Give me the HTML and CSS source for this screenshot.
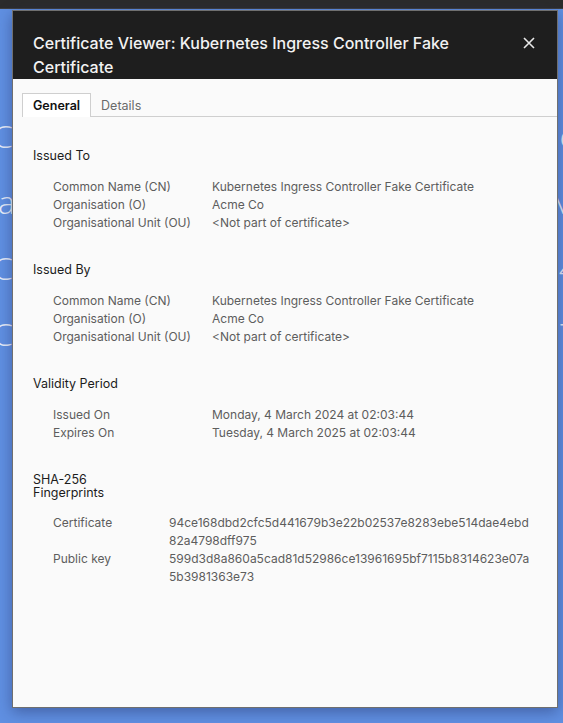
FILE: index.html
```html
<!DOCTYPE html>
<html lang="en">
<head>
<meta charset="utf-8">
<title>Certificate Viewer</title>
<link rel="stylesheet" href="styles.css">
</head>
<body>
<div class="topbar"></div>
<div class="page">
  <div class="bgline"><span class="bl bl-c">C</span><span class="br">e</span></div>
  <div class="bgline"><span class="bl bl-a">a</span><span class="br">M</span></div>
  <div class="bgline"><span class="bl bl-c">C</span><span class="br">4</span></div>
  <div class="bgline"><span class="bl bl-c">C</span><span class="br">T</span></div>
</div>

<div class="dialog">
  <div class="titlebar">
    <h1 class="title">Certificate Viewer: Kubernetes Ingress Controller Fake Certificate</h1>
    <button class="close" aria-label="Close">
      <svg width="12" height="12" viewBox="0 0 12 12"><path d="M1 1L11 11M11 1L1 11" stroke="#e8e8e8" stroke-width="1.6" fill="none"/></svg>
    </button>
  </div>
  <div class="tabs">
    <div class="tab active">General</div>
    <div class="tab">Details</div>
    <div class="tabfill"></div>
  </div>
  <div class="content">
    <section class="section">
      <h2 class="heading">Issued To</h2>
      <div class="rows">
        <div class="row"><span class="label">Common Name (CN)</span><span class="value">Kubernetes Ingress Controller Fake Certificate</span></div>
        <div class="row"><span class="label">Organisation (O)</span><span class="value">Acme Co</span></div>
        <div class="row"><span class="label">Organisational Unit (OU)</span><span class="value">&lt;Not part of certificate&gt;</span></div>
      </div>
    </section>
    <section class="section">
      <h2 class="heading">Issued By</h2>
      <div class="rows">
        <div class="row"><span class="label">Common Name (CN)</span><span class="value">Kubernetes Ingress Controller Fake Certificate</span></div>
        <div class="row"><span class="label">Organisation (O)</span><span class="value">Acme Co</span></div>
        <div class="row"><span class="label">Organisational Unit (OU)</span><span class="value">&lt;Not part of certificate&gt;</span></div>
      </div>
    </section>
    <section class="section">
      <h2 class="heading">Validity Period</h2>
      <div class="rows">
        <div class="row"><span class="label">Issued On</span><span class="value">Monday, 4 March 2024 at 02:03:44</span></div>
        <div class="row"><span class="label">Expires On</span><span class="value">Tuesday, 4 March 2025 at 02:03:44</span></div>
      </div>
    </section>
    <section class="section fp">
      <h2 class="heading heading-fp">SHA-256<br>Fingerprints</h2>
      <div class="rows">
        <div class="row"><span class="label">Certificate</span><span class="value hash">94ce168dbd2cfc5d441679b3e22b02537e8283ebe514dae4ebd82a4798dff975</span></div>
        <div class="row"><span class="label">Public key</span><span class="value hash">599d3d8a860a5cad81d52986ce13961695bf7115b8314623e07a5b3981363e73</span></div>
      </div>
    </section>
  </div>
</div>
</body>
</html>
```

FILE: styles.css
```css
html, body {
  margin: 0;
  padding: 0;
}
body {
  width: 563px;
  height: 723px;
  overflow: hidden;
  background: #6090e2;
  font-family: "Liberation Sans", Arial, sans-serif;
  position: relative;
}
.topbar {
  height: 8px;
  background: #2b2b2b;
  border-bottom: 1px solid #3d3d3d;
}
.page {
  display: flex;
  flex-direction: column;
  padding-top: 110px;
  gap: 32px;
}
.bgline {
  display: flex;
  justify-content: space-between;
  height: 34px;
  font-family: "Open Sans", sans-serif;
  font-weight: 300;
  font-size: 32px;
  line-height: 34px;
  color: rgba(255, 255, 255, 0.85);
}
.bl-c { margin-left: -7px; }
.bl-a { margin-left: -2px; }
.br { margin-right: -14px; }

.dialog {
  position: absolute;
  left: 12px;
  top: 10px;
  width: 544px;
  height: 696px;
  background: #fafafa;
  border: 1px solid #6f6f6f;
  box-shadow: 0 4px 14px rgba(30, 40, 90, 0.45);
  display: flex;
  flex-direction: column;
}
.titlebar {
  background: #1e1e1e;
  height: 68px;
  box-sizing: border-box;
  padding: 20px 0 0 20px;
  display: flex;
  align-items: flex-start;
  justify-content: space-between;
  overflow: hidden;
}
.title {
  margin: 0;
  font-family: "Inter", "Liberation Sans", sans-serif;
  font-size: 16px;
  font-weight: 500;
  line-height: 24px;
  color: #f2f2f2;
  width: 440px;
}
.close {
  background: none;
  border: none;
  padding: 0;
  margin: 6px 22px 0 0;
  width: 12px;
  height: 12px;
  display: flex;
}
.tabs {
  display: flex;
  margin-top: 14px;
  padding-left: 9px;
  height: 24px;
}
.tab {
  font-family: "Inter", "Liberation Sans", sans-serif;
  font-size: 12.5px;
  line-height: 25px;
  padding: 0 10px;
  color: #6a6a6a;
  border-bottom: 1px solid #cfcfcf;
}
.tab.active {
  color: #111;
  font-weight: 600;
  background: #fff;
  border: 1px solid #cfcfcf;
  border-bottom: none;
  line-height: 24px;
}
.tabfill {
  flex: 1;
  border-bottom: 1px solid #cfcfcf;
}
.content {
  padding: 30px 20px 0 20px;
  font-family: "Inter", "Liberation Sans", sans-serif;
  font-size: 12px;
  line-height: 18px;
}
.section {
  margin-bottom: 29px;
}
.heading {
  margin: 0 0 13px 0;
  font-size: 12.5px;
  font-weight: 400;
  line-height: 18px;
  color: #1c1c1c;
}
.heading-fp {
  line-height: 13px;
  padding-top: 2px;
  margin-bottom: 15px;
}
.rows {
  padding-left: 20px;
}
.row {
  display: flex;
  color: #5d5d5d;
}
.label {
  width: 159px;
  flex: none;
}
.fp .label {
  width: 116px;
}
.value {
  flex: 1;
  min-width: 0;
}
.hash {
  word-break: break-all;
  width: 366px;
  flex: none;
}
```
